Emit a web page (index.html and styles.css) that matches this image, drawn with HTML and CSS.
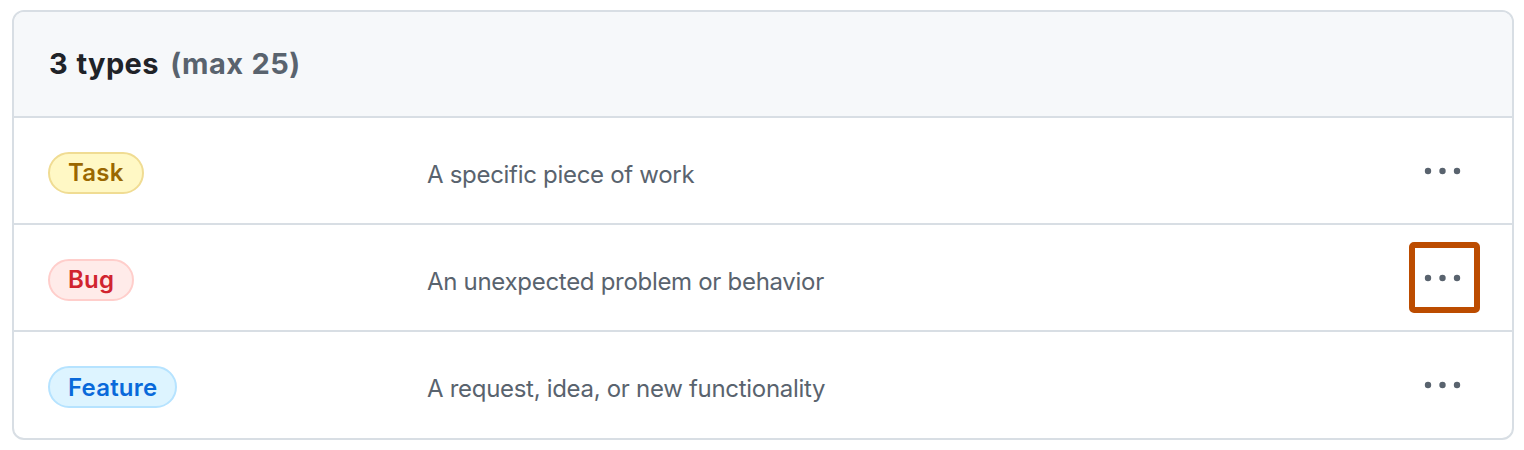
FILE: index.html
```html
<!DOCTYPE html>
<html lang="en">
<head>
<meta charset="utf-8">
<title>Issue types</title>
<link rel="stylesheet" href="styles.css">
</head>
<body>
<div class="box">
  <div class="box-header">
    <h3 class="title">3 types <span class="muted">(max 25)</span></h3>
  </div>
  <ul class="rows">
    <li class="row">
      <span class="badge badge-task">Task</span>
      <span class="desc">A specific piece of work</span>
      <button class="more" aria-label="More options">
        <svg width="37" height="8" viewBox="0 0 37 8"><circle cx="4" cy="4" r="3.2"/><circle cx="18.5" cy="4" r="3.2"/><circle cx="33" cy="4" r="3.2"/></svg>
      </button>
    </li>
    <li class="row">
      <span class="badge badge-bug">Bug</span>
      <span class="desc">An unexpected problem or behavior</span>
      <button class="more more-focus" aria-label="More options">
        <svg width="37" height="8" viewBox="0 0 37 8"><circle cx="4" cy="4" r="3.2"/><circle cx="18.5" cy="4" r="3.2"/><circle cx="33" cy="4" r="3.2"/></svg>
      </button>
    </li>
    <li class="row">
      <span class="badge badge-feature">Feature</span>
      <span class="desc">A request, idea, or new functionality</span>
      <button class="more" aria-label="More options">
        <svg width="37" height="8" viewBox="0 0 37 8"><circle cx="4" cy="4" r="3.2"/><circle cx="18.5" cy="4" r="3.2"/><circle cx="33" cy="4" r="3.2"/></svg>
      </button>
    </li>
  </ul>
</div>
</body>
</html>
```

FILE: styles.css
```css
* { box-sizing: border-box; }

body {
  margin: 0;
  background: #ffffff;
  font-family: Inter, "Liberation Sans", sans-serif;
  color: #1f2328;
}

.box {
  margin: 10px 10px 0 12px;
  width: 1502px;
  border: 2px solid #d8dee4;
  border-radius: 12px;
  overflow: hidden;
}

.box-header {
  height: 106px;
  background: #f6f8fa;
  border-bottom: 2px solid #d8dee4;
  display: flex;
  align-items: center;
  padding-left: 35px;
  padding-bottom: 1px;
}

.title {
  margin: 0;
  font-size: 29px;
  font-weight: 700;
  color: #1f2328;
  letter-spacing: 0.4px;
  word-spacing: 1px;
}

.muted { color: #59636e; margin-left: 3px; }

.rows {
  list-style: none;
  margin: 0;
  padding: 0;
}

.row {
  height: 107px;
  display: grid;
  grid-template-columns: 379px 1fr auto;
  align-items: center;
  padding: 0 33px 0 34px;
  border-bottom: 2px solid #d8dee4;
}

.row:last-child {
  height: 106px;
  border-bottom: none;
}

.badge {
  justify-self: start;
  display: inline-flex;
  align-items: center;
  height: 42px;
  margin-top: 4px;
  padding: 0 18px;
  border: 2px solid;
  border-radius: 21px;
  font-size: 24px;
  font-weight: 600;
  letter-spacing: 0.2px;
}

.badge-task { background: #fff8c5; border-color: #f0dc93; color: #9a6700; }
.badge-bug { background: #ffebe9; border-color: #ffcecb; color: #d1242f; }
.badge-feature { background: #ddf4ff; border-color: #b6e3ff; color: #0969da; }

.desc {
  font-size: 24px;
  letter-spacing: -0.3px;
  color: #59636e;
  padding-top: 7px;
}

.more {
  width: 71px;
  height: 71px;
  display: flex;
  align-items: center;
  justify-content: center;
  background: none;
  border: 6px solid transparent;
  border-radius: 5px;
  padding: 0 5px 0 0;
  margin-right: -1px;
  fill: #59636e;
}

.more-focus { border-color: #bc4c00; }
```
